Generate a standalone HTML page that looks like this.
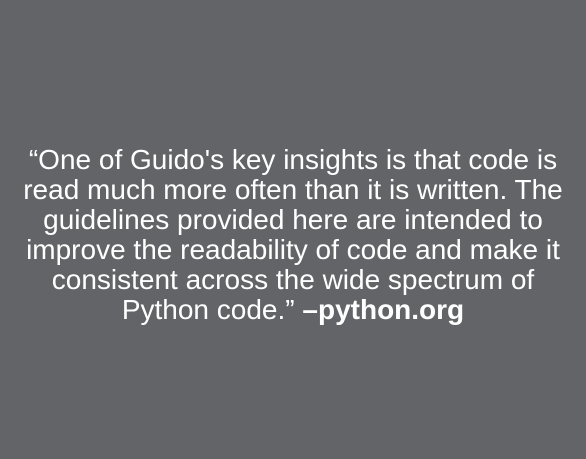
<!DOCTYPE html>
<html><head><style>
html,body{margin:0;padding:0;}
body{width:586px;height:459px;background:#636468;overflow:hidden;position:relative;font-family:"Liberation Sans",sans-serif;}
.q{position:absolute;left:0;top:145px;width:586px;text-align:center;color:#fff;font-size:28px;line-height:30px;}
b{font-weight:bold;}
</style></head><body>
<div class="q">“One of Guido's key insights is that code is<br>read much more often than it is written. The<br>guidelines provided here are intended to<br>improve the readability of code and make it<br>consistent across the wide spectrum of<br>Python code.” <b>–python.org</b></div>
</body></html>
